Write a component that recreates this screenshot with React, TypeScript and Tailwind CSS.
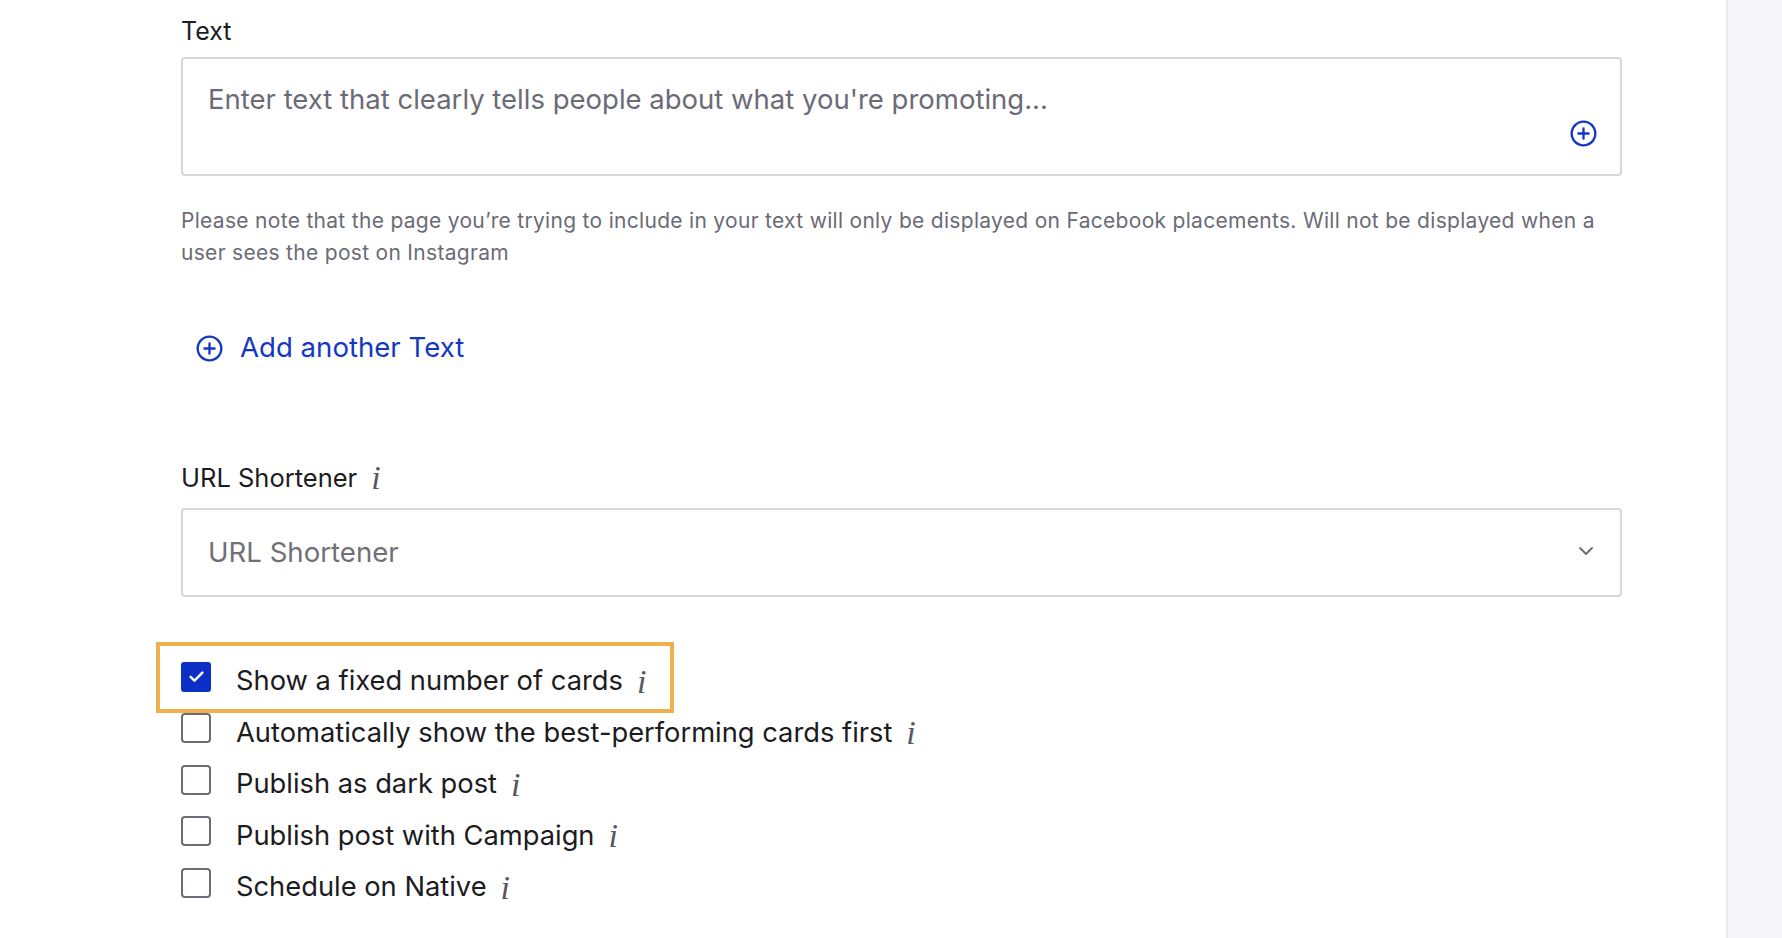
import { useState } from "react";

const PlusCircle = ({ size = 27 }: { size?: number }) => (
  <svg width={size} height={size} viewBox="0 0 24 24" fill="none" stroke="#1637c4" strokeWidth={2.1} strokeLinecap="round">
    <circle cx="12" cy="12" r="10.5" />
    <path d="M12 7.5v9M7.5 12h9" />
  </svg>
);

const InfoMark = () => (
  <span className="ml-[14px] text-[34px] leading-none italic text-[#575762]" style={{ fontFamily: '"Liberation Serif", serif' }}>
    i
  </span>
);

interface OptionRowProps {
  label: string;
  checked?: boolean;
  highlighted?: boolean;
  onToggle: () => void;
}

const OptionRow: React.FC<OptionRowProps> = ({ label, checked, highlighted, onToggle }) => (
  <div className="relative flex h-[51.5px] items-center">
    {highlighted && (
      <div className="pointer-events-none absolute -left-[25px] -top-[14px] h-[71px] w-[518px] border-4 border-[#f0b04c]" />
    )}
    <button
      onClick={onToggle}
      className={
        checked
          ? "mb-[10px] flex h-[30px] w-[30px] shrink-0 items-center justify-center rounded-[3px] bg-[#0b2fc6]"
          : "mb-[10px] h-[30px] w-[30px] shrink-0 rounded-[4px] border-2 border-[#6b6b75] bg-white"
      }
    >
      {checked && (
        <svg width="19" height="19" viewBox="0 0 16 16" fill="none" stroke="white" strokeWidth={2} strokeLinecap="round" strokeLinejoin="round">
          <path d="M3 8.3l3.3 3.2L13 4.7" />
        </svg>
      )}
    </button>
    <span className="ml-[25px] text-[27.3px] text-[#1c1c1f]">{label}</span>
    <InfoMark />
  </div>
);

export default function App() {
  const [options, setOptions] = useState([
    { label: "Show a fixed number of cards", checked: true },
    { label: "Automatically show the best-performing cards first", checked: false },
    { label: "Publish as dark post", checked: false },
    { label: "Publish post with Campaign", checked: false },
    { label: "Schedule on Native", checked: false },
  ]);

  const toggle = (i: number) =>
    setOptions((prev) => prev.map((o, idx) => (idx === i ? { ...o, checked: !o.checked } : o)));

  return (
    <div className="flex h-[938px] w-full overflow-hidden bg-white" style={{ fontFamily: 'Inter, "Noto Sans", sans-serif' }}>
      <main className="flex-1 pl-[181px] pr-[104px] pt-[16px]">
        <div className="h-[30px] text-[25px] leading-[30px] text-[#1c1c1f]">Text</div>

        <div className="mt-[11px] flex h-[119px] flex-col rounded-[4px] border-2 border-[#d6d6dc] pl-[25px] pr-[23px] pt-[24px]">
          <div className="text-[27.5px] leading-[32px] text-[#6b6b77]">
            Enter text that clearly tells people about what you're promoting...
          </div>
          <div className="mt-auto mb-[27px] flex justify-end">
            <PlusCircle />
          </div>
        </div>

        <p className="mt-[29px] text-[21px] leading-[32px] tracking-[0.3px] text-[#6b6b75]">
          Please note that the page you’re trying to include in your text will only be displayed on Facebook placements. Will not be displayed when a user sees the post on Instagram
        </p>

        <button className="mt-[59px] ml-[15px] flex h-[40px] items-center gap-[17px] text-[27.6px] text-[#1637c4]">
          <PlusCircle />
          Add another Text
        </button>

        <div className="mt-[95px] flex h-[30px] items-center text-[25.5px] text-[#1c1c1f]">
          URL Shortener
          <InfoMark />
        </div>

        <div className="mt-[15px] flex h-[89px] items-center justify-between rounded-[4px] border-2 border-[#d6d6dc] pl-[25px] pr-[25px]">
          <span className="text-[27.6px] text-[#707079]">URL Shortener</span>
          <svg className="mb-[4px]" width="18" height="18" viewBox="0 0 18 18" fill="none" stroke="#6e6e78" strokeWidth={2} strokeLinecap="round" strokeLinejoin="round">
            <path d="M3 6l6 6 6-6" />
          </svg>
        </div>

        <div className="mt-[59px] flex flex-col">
          {options.map((o, i) => (
            <OptionRow key={o.label} label={o.label} checked={o.checked} highlighted={i === 0} onToggle={() => toggle(i)} />
          ))}
        </div>
      </main>
      <aside className="w-[56px] shrink-0 border-l-2 border-[#e9e9ee] bg-[#f6f6f8]" />
    </div>
  );
}
